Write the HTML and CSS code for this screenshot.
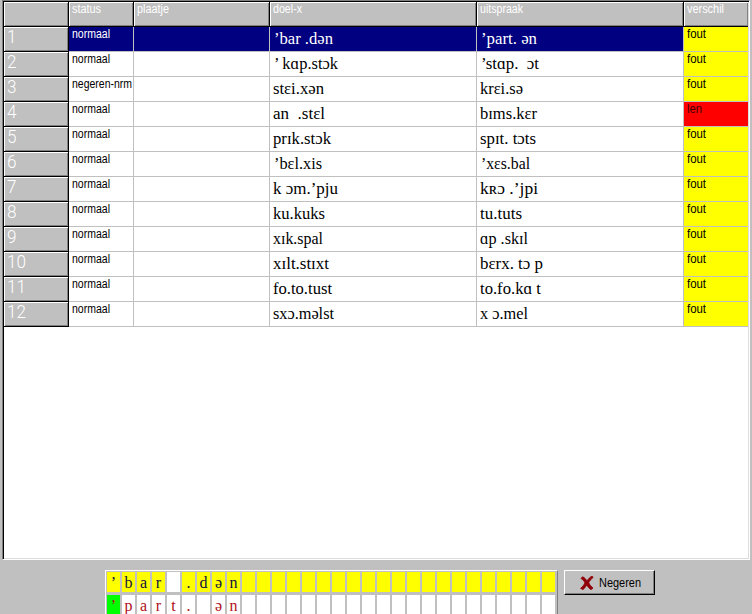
FILE: index.html
```html
<!DOCTYPE html>
<html lang="nl">
<head>
<meta charset="utf-8">
<title>Uitspraak</title>
<link rel="stylesheet" href="styles.css">
</head>
<body>
<main class="frame">
  <div class="grid" id="grid">
    <div class="head corner"></div>
    <div class="head"><span data-w="29">status</span></div>
    <div class="head"><span data-w="32">plaatje</span></div>
    <div class="head"><span data-w="29">doel-x</span></div>
    <div class="head"><span data-w="43">uitspraak</span></div>
    <div class="head last"><span data-w="37">verschil</span></div>
  </div>
</main>
<footer class="bottom">
  <div class="compare">
    <div class="strip target" id="target"></div>
    <div class="strip spoken" id="spoken"></div>
  </div>
  <button class="ignore" type="button">
    <svg width="14" height="14" viewBox="0 0 14 14"><path d="M1 2.500 2.500.8C4.500 1.500 6 3.500 7 4.800 8.500 3 10 1 12 .3L13.200 1.300C11 3 9.600 5 8.700 6.800 9.700 9 11.500 11 13 12L11 13.600C9 12.500 7.800 10.500 6.700 8.900 5.500 10.800 4.300 12.700 3 13.500L.6 12.400C2.500 11 4 9 5 6.900 4 5 2.800 3.400 1 2.500Z" fill="#900008" stroke="#900008" stroke-width=".9"/></svg>
    <span data-w="42">Negeren</span>
  </button>
</footer>
<script src="grid.js"></script>
</body>
</html>
```
FILE: styles.css
```css
* { box-sizing: border-box; }
body {
  margin: 0;
  width: 752px;
  height: 614px;
  overflow: hidden;
  background: #c0c0c0;
  font: 12px/14px "Liberation Sans", Arial, sans-serif;
  color: #000;
}
span { white-space: pre; display: inline-block; transform-origin: 0 0; }
.frame {
  width: 748px;
  height: 560px;
  margin-left: 2px;
  background: #fff;
  border-style: solid;
  border-width: 1px;
  border-color: #808080 #fff #fff #808080;
  box-shadow: inset 1px 1px #000, inset -1px -1px #dcdcdc;
  padding: 1px;
}
.grid {
  display: grid;
  grid-template-columns: 65px 65px 136px 207px 207px 64px;
  grid-auto-rows: 25px;
}
.head, .num {
  background: #c0c0c0;
  color: #fff;
  border-right: 1px solid #000;
  border-bottom: 1px solid #000;
  box-shadow: inset 1px 1px #fff, inset -1px -1px #808080;
}
.head { padding: 0 0 0 3px; }
.head.last { border-right: 0; }
.num {
  font: 300 18px/19px Roboto, "Liberation Sans", sans-serif;
  padding: 0 0 0 3px;
}
.cell {
  background: #fff;
  border-right: 1px solid #c0c0c0;
  border-bottom: 1px solid #c0c0c0;
  padding: 0 0 0 3px;
}
.cell.ipa {
  font: 17px/20px "Liberation Serif", "DejaVu Serif", serif;
  padding: 2px 0 0 3px;
}
.cell.ipa.lead { padding-left: 4px; }
.cell.selected { background: #000080; color: #fff; }
.cell.verdict { background: #ff0; border-right: 0; }
.cell.length { background: #f00; color: #400; }
.bottom {
  display: flex;
  align-items: flex-start;
  gap: 6px;
  padding: 10px 0 0 105px;
}
.compare {
  width: 453px;
  height: 44px;
  overflow: hidden;
  border-top: 1px solid #fff;
  border-left: 1px solid #fff;
  border-right: 1px solid #808080;
  padding: 1px 0 0 1px;
}
.strip {
  display: grid;
  grid-template-columns: repeat(30, 13px);
  column-gap: 2px;
  font: 16px/22px "Liberation Serif", "DejaVu Serif", serif;
  text-align: center;
}
.strip div { height: 20px; background: #fff; }
.strip .yellow { background: #ff0; }
.strip .green { background: #0f0; }
.target { margin-bottom: 3px; color: #101040; }
.spoken { color: #b01020; }
.ignore {
  display: flex;
  align-items: center;
  gap: 5px;
  width: 91px;
  height: 25px;
  padding: 1px 0 0 15px;
  background: #c0c0c0;
  border-style: solid;
  border-width: 1px;
  border-color: #fff #000 #000 #fff;
  box-shadow: inset -1px -1px #808080;
  font: inherit;
  color: #000;
}
```
FILE: grid.js
```js
// status, target, its width, pronunciation, its width, verdict
const rows = [
  ["normaal", "’bar .dən", 59, "’part. ən", 56, "fout"],
  ["normaal", "’ kɑp.stɔk", 64, "’stɑp.  ɔt", 58, "fout"],
  ["negeren-nrm", "stɛi.xən", 51, "krɛi.sə", 43, "fout"],
  ["normaal", "an  .stɛl", 52, "bɪms.kɛr", 57, "len"],
  ["normaal", "prɪk.stɔk", 58, "spɪt. tɔts", 56, "fout"],
  ["normaal", "’bɛl.xis", 48, "’xɛs.bal", 49, "fout"],
  ["normaal", "k ɔm.’pju", 65, "kʀɔ .’jpi", 58, "fout"],
  ["normaal", "ku.kuks", 52, "tu.tuts", 42, "fout"],
  ["normaal", "xɪk.spal", 50, "ɑp .skɪl", 48, "fout"],
  ["normaal", "xɪlt.stɪxt", 56, "bɛrx. tɔ p", 63, "fout"],
  ["normaal", "fo.to.tust", 59, "to.fo.kɑ t", 61, "fout"],
  ["normaal", "sxɔ.məlst", 61, "x ɔ.mel", 48, "fout"]
];

function add(parent, cls, text, width) {
  const cell = document.createElement("div");
  cell.className = cls;
  if (text) {
    const span = document.createElement("span");
    span.textContent = text;
    if (width) span.dataset.w = width;
    cell.append(span);
  }
  parent.append(cell);
}

const grid = document.getElementById("grid");
rows.forEach(([status, target, tw, spoken, sw, verdict], i) => {
  const sel = i === 0 ? " selected" : "";
  const lead = t => (t[0] === "’" ? " lead" : "");
  add(grid, "num", String(i + 1), i > 8 ? 19 : 9.5);
  add(grid, "cell" + sel, status, status === "normaal" ? 38 : 60);
  add(grid, "cell" + sel, "");
  add(grid, "cell ipa" + sel + lead(target), target, tw);
  add(grid, "cell ipa" + sel + lead(spoken), spoken, sw);
  add(grid, "cell verdict" + (verdict === "len" ? " length" : ""), verdict, verdict === "len" ? 15 : 19);
});

function strip(id, chars, color) {
  const box = document.getElementById(id);
  for (let i = 0; i < 30; i++) {
    const cell = document.createElement("div");
    cell.className = color(i);
    cell.textContent = (chars[i] || "").trim();
    box.append(cell);
  }
}
strip("target", "’bar .dən", i => (i === 4 ? "" : "yellow"));
strip("spoken", "’part. ən", i => (i === 0 ? "green" : ""));

// Condenses each label to its width.
document.querySelectorAll("[data-w]").forEach(el => {
  el.style.transform = `scaleX(${el.dataset.w / el.getBoundingClientRect().width})`;
});
```
